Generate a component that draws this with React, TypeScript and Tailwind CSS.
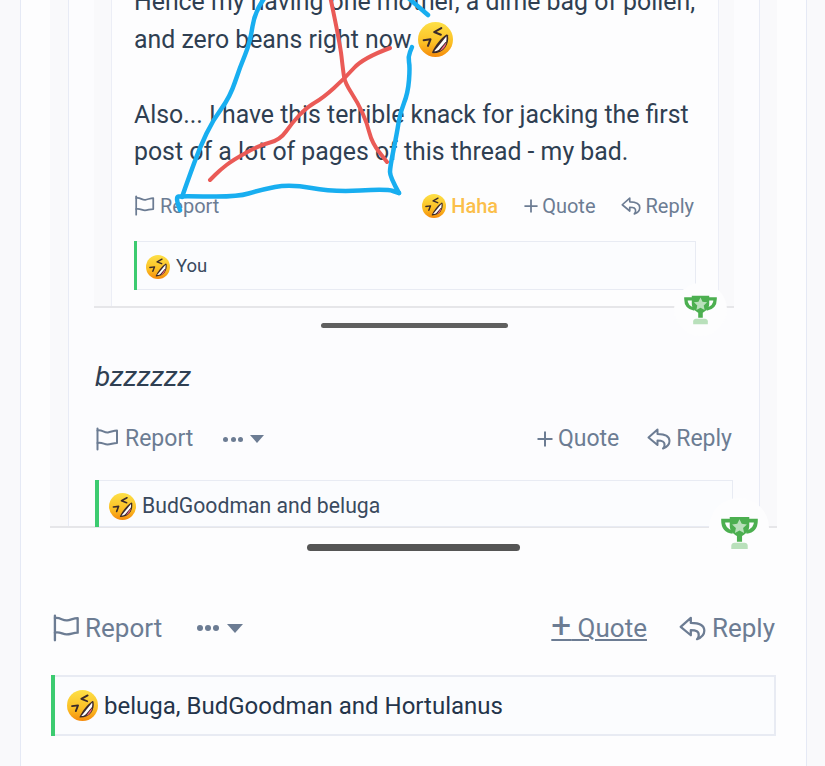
import { useId } from 'react';

function LaughEmoji({ size }: { size: number }) {
  const id = useId();
  return (
    <svg width={size} height={size} viewBox="0 0 32 32" className="shrink-0">
      <defs>
        <linearGradient id={id} x1="0" y1="0" x2="0" y2="1">
          <stop offset="0" stopColor="#fde047" />
          <stop offset="0.6" stopColor="#fbbf24" />
          <stop offset="1" stopColor="#f58a0b" />
        </linearGradient>
      </defs>
      <circle cx="16" cy="16" r="16" fill={`url(#${id})`} />
      <path d="M27.4 12 C28.8 20 24 28.5 13.5 28.5 C13 28.5 12.8 28 13 27.5 C16 21 21 15 26 11.5 C26.6 11.2 27.2 11.5 27.4 12 Z" fill="#3a2a2a" />
      <path d="M26 13 L14.8 26.8 C16.5 26.8 18.2 26.4 19.5 25 L25.8 17.5 C26.2 16 26.2 14.5 26 13 Z" fill="#fff" />
      <path d="M26 18.5 C25.6 22 23 25.5 20 26.6 C21.8 23.8 23.8 21 26 18.5 Z" fill="#f0657f" />
      <path d="M21.3 5.6 L14.8 9.2 L20.9 11.6" fill="none" stroke="#3a2a2a" strokeWidth="1.9" strokeLinecap="round" strokeLinejoin="round" />
      <path d="M5.2 16.6 L11.4 15.8 L9.1 21.8" fill="none" stroke="#3a2a2a" strokeWidth="1.9" strokeLinecap="round" strokeLinejoin="round" />
    </svg>
  );
}

function FlagIcon({ size }: { size: number }) {
  return (
    <svg width={size} height={size} viewBox="0 0 24 24" fill="none" stroke="currentColor" strokeWidth="2" strokeLinecap="round" strokeLinejoin="round" className="shrink-0">
      <path d="M2.5 1.5 L2.5 22.5" />
      <path d="M2.5 3.5 C7 2.5 9 6 13 5.5 C16 5 19 3.5 22 3.5 L22 16 C18 16 16 17.5 12.5 17.5 C9 17.5 7 15 2.5 16" />
    </svg>
  );
}

function ReplyIcon({ size }: { size: number }) {
  return (
    <svg width={size} height={size} viewBox="0 0 24 24" fill="none" stroke="currentColor" strokeWidth="2" strokeLinejoin="round" strokeLinecap="round" className="shrink-0">
      <path d="M10.5 2.5 L1.5 10.5 L10.5 18 L10.5 13.5 C15 13.5 18 14.5 17.5 18.5 C17.3 20 16.5 21 16 21.5 C20 20 22.5 17 22.5 14 C22.5 9 17 7 10.5 7 Z" />
    </svg>
  );
}

function PlusIcon({ size }: { size: number }) {
  return (
    <svg width={size} height={size} viewBox="0 0 16 16" fill="none" stroke="currentColor" strokeWidth="2" className="shrink-0">
      <path d="M8 0.5 V15.5 M0.5 8 H15.5" />
    </svg>
  );
}

function TrophyBadge({ size, className }: { size: number; className: string }) {
  return (
    <div className={`absolute flex items-center justify-center rounded-full bg-[#fdfdfe] ${className}`}>
      <svg width={size} height={size} viewBox="0 0 36 32">
        <path d="M8.5 1 H27.5 V10 C27.5 15 22.5 18.5 20.5 19.5 V25 H15.5 V19.5 C13.5 18.5 8.5 15 8.5 10 Z" fill="#4caf50" />
        <path d="M9 4.5 H2 C2 10 5 14.5 11.5 15.5 M27 4.5 H34 C34 10 31 14.5 24.5 15.5" fill="none" stroke="#4caf50" strokeWidth="3.6" />
        <path d="M13 26 H23 C24.5 26 26 27 26 29 V32 H10 V29 C10 27 11.5 26 13 26 Z" fill="#b9e0bb" />
        <path d="M18 3 L20.2 7.6 L25.2 8.2 L21.5 11.6 L22.5 16.6 L18 14.1 L13.5 16.6 L14.5 11.6 L10.8 8.2 L15.8 7.6 Z" fill="#b9e0bb" />
      </svg>
    </div>
  );
}

function ReactionBox({ size, gap, className, text }: { size: number; gap: string; className: string; text: string }) {
  return (
    <div className={`flex items-center border border-l-0 border-[#e8ebf3] bg-[#fbfcfe] ${gap} ${className}`}>
      <LaughEmoji size={size} />
      <span>{text}</span>
    </div>
  );
}

// smooths a hand-drawn stroke through its points
function scribble(points: number[][]) {
  let d = `M${points[0][0]} ${points[0][1]}`;
  for (let i = 1; i < points.length - 1; i++) {
    const [x, y] = points[i];
    const [nx, ny] = points[i + 1];
    d += ` Q${x} ${y} ${(x + nx) / 2} ${(y + ny) / 2}`;
  }
  const last = points[points.length - 1];
  return `${d} L${last[0]} ${last[1]}`;
}

const blueLeft = [[266, -4], [255, 10], [250, 43], [240, 67], [230, 97], [213, 120], [200, 147], [188, 180], [182, 197]];
const blueBase = [[180, 210], [175, 197], [182, 196], [237, 197], [260, 190], [290, 184], [333, 192], [387, 189], [399, 193]];
const blueRight = [[399, 193], [390, 177], [390, 167], [397, 133], [400, 113], [408, 93], [410, 67], [408, 57], [412, 47]];
const redDown = [[330, -4], [340, 43], [343, 70], [345, 83], [358, 103], [367, 123], [372, 143], [387, 162]];
const redUp = [[390, 48], [363, 58], [345, 78], [323, 98], [307, 107], [292, 123], [280, 140], [260, 145], [233, 160], [220, 170], [210, 180]];

export default function App() {
  return (
    <div className="relative h-[766px] w-[825px] overflow-hidden bg-[#f9f9fb] font-['Roboto',sans-serif]">
      {/* outer post */}
      <div className="ml-[20px] h-full w-[787px] border-x border-[#e5e9f5] bg-[#fdfdfe]">
        {/* middle screenshot */}
        <div className="relative ml-[29px] h-[528px] w-[727px] border-b-2 border-[#e6e6e9] bg-[#f9f9fb]">
          <div className="ml-[18px] h-full w-[692px] border-x border-[#e8ebf5] bg-[#fcfcfe]">
            {/* inner screenshot */}
            <div className="relative ml-[25px] h-[308px] w-[640px] border-b-2 border-[#e6e6e9] bg-[#f9f9fb]">
              <div className="ml-[17px] h-full w-[608px] overflow-hidden border-x border-[#eceef6] bg-[#fdfdfe] px-[22px] text-[#2f3f52]">
                <div className="-mt-[17px] text-[24.85px] leading-[37.5px]">
                  <p className="whitespace-nowrap">Hence my having one mother, a dime bag of pollen,</p>
                  <p className="flex items-center gap-[6px] whitespace-nowrap">
                    and zero beans right now
                    <LaughEmoji size={35} />
                  </p>
                  <p className="mt-[37.5px] whitespace-nowrap">Also... I have this terrible knack for jacking the first</p>
                  <p className="whitespace-nowrap">post of a lot of pages of this thread - my bad.</p>
                </div>
                <div className="mt-[16px] flex items-center justify-between text-[20px] leading-[38px] text-[#6c7c93]">
                  <div className="flex items-center gap-[5px]">
                    <FlagIcon size={21} />
                    <span>Report</span>
                  </div>
                  <div className="flex items-center pr-[2px]">
                    <LaughEmoji size={24} />
                    <span className="ml-[5px] mr-[26px] font-medium text-[#fbbf4b]">Haha</span>
                    <PlusIcon size={14} />
                    <span className="ml-[4px]">Quote</span>
                    <span className="ml-[25px] mr-[5px]"><ReplyIcon size={20} /></span>
                    <span>Reply</span>
                  </div>
                </div>
                <div className="mt-[16px] flex h-[49px] border-l-[3px] border-[#3ccb70]">
                  <ReactionBox size={24} gap="gap-[6px] pl-[9px] pt-[3px]" className="w-full text-[18.5px] text-[#3a4a5e]" text="You" />
                </div>
              </div>
              <TrophyBadge size={33} className="left-[580px] top-[283px] h-[53px] w-[53px]" />
            </div>
            {/* bar */}
            <div className="ml-[252px] mt-[15px] h-[5px] w-[187px] rounded-full bg-[#5f5f5f]" />
            <p className="mt-[31px] pl-[26px] text-[28px] italic leading-[36px] text-[#2f3f52]">bzzzzzz</p>
            <div className="mt-[24px] flex items-center justify-between pl-[26px] pr-[27px] text-[23px] leading-[40px] text-[#6c7c93]">
              <div className="flex items-center">
                <FlagIcon size={24} />
                <span className="ml-[6px]">Report</span>
                <span className="ml-[30px] flex items-center gap-[7px]">
                  <span className="flex gap-[2.5px]">
                    <span className="h-[5px] w-[5px] rounded-full bg-[#6c7c93]" />
                    <span className="h-[5px] w-[5px] rounded-full bg-[#6c7c93]" />
                    <span className="h-[5px] w-[5px] rounded-full bg-[#6c7c93]" />
                  </span>
                  <span className="h-0 w-0 border-x-[7px] border-t-[8px] border-x-transparent border-t-[#6c7c93]" />
                </span>
              </div>
              <div className="flex items-center">
                <PlusIcon size={16} />
                <span className="ml-[5px]">Quote</span>
                <span className="ml-[28px] mr-[5px]"><ReplyIcon size={24} /></span>
                <span>Reply</span>
              </div>
            </div>
            <div className="ml-[26px] mr-[26px] mt-[21px] flex h-[47px] border-l-[4px] border-[#3ccb70]">
              <ReactionBox size={27} gap="gap-[6px] pl-[10px] pt-[5px]" className="w-full text-[21.2px] text-[#3a4a5e]" text="BudGoodman and beluga" />
            </div>
          </div>
          <TrophyBadge size={37} className="left-[659px] top-[498px] h-[60px] w-[60px] pt-[8px]" />
        </div>
        {/* bar */}
        <div className="ml-[286px] mt-[16px] h-[7px] w-[213px] rounded-full bg-[#555555]" />
        {/* outer actions */}
        <div className="ml-[31px] mr-[31px] mt-[55px] flex items-center justify-between text-[26px] leading-[44px] text-[#6c7c93]">
          <div className="flex items-center">
            <FlagIcon size={28} />
            <span className="ml-[5px]">Report</span>
            <span className="ml-[35px] flex items-center gap-[8px]">
              <span className="flex gap-[2px]">
                <span className="h-[6px] w-[6px] rounded-full bg-[#6c7c93]" />
                <span className="h-[6px] w-[6px] rounded-full bg-[#6c7c93]" />
                <span className="h-[6px] w-[6px] rounded-full bg-[#6c7c93]" />
              </span>
              <span className="h-0 w-0 border-x-[8px] border-t-[9px] border-x-transparent border-t-[#6c7c93]" />
            </span>
          </div>
          <div className="flex items-center">
            <span className="underline decoration-2 underline-offset-[2px]">
              <span className="text-[35px] leading-[34px]">+</span> Quote
            </span>
            <span className="ml-[32px] mr-[6px]"><ReplyIcon size={27} /></span>
            <span>Reply</span>
          </div>
        </div>
        <div className="ml-[30px] mr-[30px] mt-[25px] flex h-[61px] border-l-[4px] border-[#3ccb70]">
          <ReactionBox size={31} gap="gap-[6px] pl-[12px]" className="w-full border-2 border-l-0 text-[24px] text-[#24344a]" text="beluga, BudGoodman and Hortulanus" />
        </div>
      </div>
      {/* the scribble drawn over the screenshot */}
      <svg className="absolute left-0 top-0" width="825" height="330" viewBox="0 0 825 330" fill="none" strokeLinecap="round" strokeLinejoin="round">
        <path d={scribble(blueLeft)} stroke="#18aef0" strokeWidth="4.5" />
        <path d={scribble(blueBase)} stroke="#18aef0" strokeWidth="4.5" />
        <path d={scribble(blueRight)} stroke="#18aef0" strokeWidth="4.5" />
        <path d="M406 -4 L428 15" stroke="#18aef0" strokeWidth="4.5" />
        <path d={scribble(redDown)} stroke="#ea5a56" strokeWidth="4" />
        <path d={scribble(redUp)} stroke="#ea5a56" strokeWidth="4" />
      </svg>
    </div>
  );
}
